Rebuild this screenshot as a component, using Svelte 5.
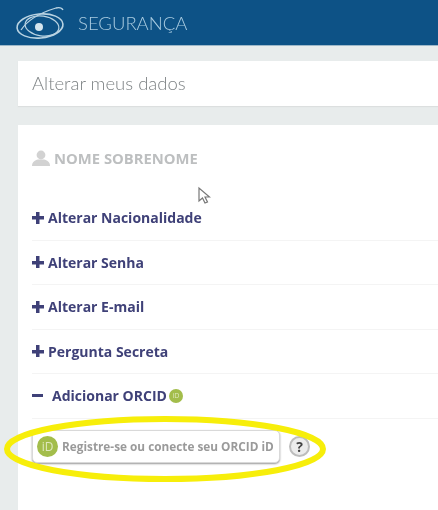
<script>
  const items = ['Alterar Nacionalidade', 'Alterar Senha', 'Alterar E-mail', 'Pergunta Secreta'];
</script>

<div class="page">
  <header class="topbar">
    <svg class="logo" viewBox="0 0 52 36" width="52" height="36" fill="none" stroke="#b9d3e2">
      <ellipse cx="26" cy="21" rx="23" ry="12" stroke-width="1.6" transform="rotate(-5 26 21)" />
      <ellipse cx="28" cy="21" rx="17" ry="10" stroke-width="1.2" transform="rotate(8 28 21)" />
      <path d="M7 25C15 13 32 6 42 3 46 2 48 3 49 5" stroke-width="1.3" />
      <circle cx="25" cy="22" r="4" fill="#d5e5ee" stroke="none" />
    </svg>
    <span class="title">SEGURANÇA</span>
  </header>

  <div class="card subtitle">Alterar meus dados</div>

  <section class="card panel">
    <div class="user">
      <svg viewBox="0 0 18 16" width="18" height="16" fill="#d2d2d2">
        <circle cx="9" cy="5" r="4.400" />
        <path d="M0 16c0-4 3-6 6-6.500h6c3 .5 6 2.500 6 6.500z" />
      </svg>
      <span>NOME SOBRENOME</span>
    </div>

    <ul class="menu">
      {#each items as label}
        <li><span class="sign plus"></span>{label}</li>
      {/each}
      <li class="open">
        <span class="sign minus"></span>Adicionar ORCID<span class="id small">iD</span>
      </li>
    </ul>

    <div class="orcid-row">
      <button class="orcid-btn"><span class="id">iD</span>Registre-se ou conecte seu ORCID iD</button>
      <span class="help">?</span>
    </div>
  </section>

  <svg class="cursor" viewBox="0 0 14 20" width="14" height="20">
    <path d="M2 2v13l3.500-3 2.500 5 2.500-1-2.500-5h4.500z" fill="#fff" stroke="#777" stroke-width="1.200" />
  </svg>

  <svg class="ring" viewBox="0 0 330 70" width="330" height="70" fill="none">
    <ellipse cx="165" cy="35" rx="158" ry="30" stroke="#f7ee0a" stroke-width="6" />
  </svg>
</div>

<style>
  :global(body) {
    margin: 0;
  }

  .page {
    position: relative;
    width: 438px;
    height: 510px;
    overflow: hidden;
    background: #e8ecec;
    font-family: "Open Sans", sans-serif;
    filter: blur(0.5px);
  }

  .topbar {
    display: flex;
    align-items: center;
    gap: 12px;
    height: 45px;
    padding-left: 14px;
    background: #0d5286;
    border-bottom: 1px solid #9db8c9;
  }

  .title {
    color: #a9cbe0;
    font-family: "Lato", sans-serif;
    font-size: 18.500px;
    font-weight: 300;
  }

  .card {
    margin-left: 18px;
    background: #fff;
  }

  .subtitle {
    margin-top: 15px;
    height: 45px;
    padding-left: 14px;
    color: #7d8284;
    font-family: "Lato", sans-serif;
    font-size: 18.500px;
    font-weight: 300;
    line-height: 45px;
    box-shadow: 0 1px 1px #dcdfdf;
  }

  .panel {
    margin-top: 19px;
    height: 385px;
    padding: 25px 0 0 14px;
  }

  .user {
    display: flex;
    align-items: center;
    gap: 4px;
    height: 16px;
    color: #bdbfc0;
    font-size: 14.800px;
    font-weight: 700;
  }

  .menu {
    margin: 30px 0 0;
    padding: 0;
    list-style: none;
  }

  .menu li {
    display: flex;
    align-items: center;
    height: 44.500px;
    color: #3f4178;
    font-size: 14px;
    font-weight: 700;
    border-bottom: 1px solid #f4f4f4;
    box-sizing: border-box;
  }

  .sign {
    flex: none;
  }

  .plus {
    width: 12px;
    height: 12px;
    margin-right: 4px;
    background:
      linear-gradient(#3f4178, #3f4178) center / 12px 3.500px no-repeat,
      linear-gradient(#3f4178, #3f4178) center / 3.500px 12px no-repeat;
  }

  .minus {
    width: 11px;
    height: 3px;
    margin: 0 9px 0 0;
    background: #3f4178;
  }

  .id {
    display: flex;
    align-items: center;
    justify-content: center;
    flex: none;
    width: 21px;
    height: 21px;
    margin-right: 4px;
    border-radius: 50%;
    background: #a3bd4b;
    color: #dfe8bd;
    font-size: 12px;
    font-weight: 400;
  }

  .id.small {
    width: 14px;
    height: 14px;
    margin: 0 0 0 2px;
    font-size: 7px;
  }

  .orcid-row {
    display: flex;
    align-items: center;
    gap: 9px;
    margin-top: 11px;
  }

  .orcid-btn {
    display: flex;
    align-items: center;
    width: 248px;
    height: 33px;
    padding: 0 0 0 4px;
    border: 1px solid #d9d9d9;
    border-radius: 5px;
    background: #fff;
    box-shadow: 0 1px 2px #999;
    color: #9a9a9a;
    font-family: "Open Sans", sans-serif;
    font-size: 11.800px;
    font-weight: 700;
    white-space: nowrap;
  }

  .help {
    display: flex;
    align-items: center;
    justify-content: center;
    width: 17px;
    height: 17px;
    border: 2px solid #bdbdbd;
    border-radius: 50%;
    background: #ececec;
    color: #444;
    font-size: 14px;
    font-weight: 700;
  }

  .cursor {
    position: absolute;
    left: 197px;
    top: 186px;
  }

  .ring {
    position: absolute;
    left: 0;
    top: 414px;
  }
</style>
